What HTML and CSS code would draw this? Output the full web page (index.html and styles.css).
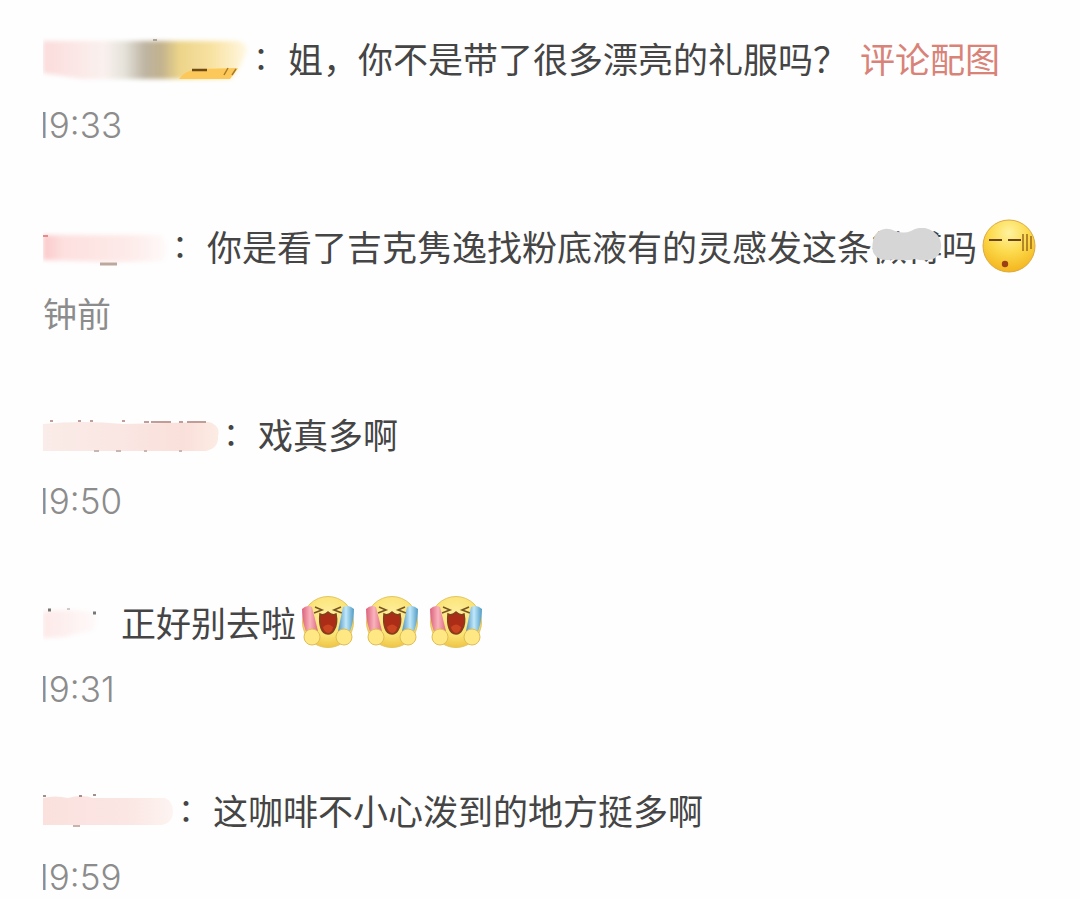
FILE: index.html
```html
<!DOCTYPE html>
<html lang="zh-CN">
<head>
<meta charset="utf-8">
<meta name="viewport" content="width=device-width, initial-scale=1">
<title>评论</title>
<link rel="stylesheet" href="styles.css">
</head>
<body>
<svg class="defs" aria-hidden="true">
  <defs>
    <filter id="soft" x="-10%" y="-30%" width="120%" height="160%"><feGaussianBlur stdDeviation="2"/></filter>
    <filter id="edge" x="-10%" y="-30%" width="120%" height="160%"><feGaussianBlur stdDeviation="0.7"/></filter>
    <linearGradient id="g1">
      <stop offset="0" stop-color="#fbdcdc"/><stop offset=".3" stop-color="#faf1ee"/><stop offset=".4" stop-color="#e5e2da"/><stop offset=".5" stop-color="#beb4a2"/><stop offset=".58" stop-color="#c2b28e"/><stop offset=".67" stop-color="#ecd489"/><stop offset=".84" stop-color="#f9e3a5"/><stop offset="1" stop-color="#fff8e3"/>
    </linearGradient>
    <linearGradient id="g2">
      <stop offset="0" stop-color="#fcc9ca"/><stop offset=".16" stop-color="#fde0df"/><stop offset=".7" stop-color="#fdebe9"/><stop offset="1" stop-color="#fefafa"/>
    </linearGradient>
    <linearGradient id="g3">
      <stop offset="0" stop-color="#faece8"/><stop offset=".45" stop-color="#fae6e3"/><stop offset=".8" stop-color="#fae0da"/><stop offset="1" stop-color="#fcece3"/>
    </linearGradient>
    <linearGradient id="g4">
      <stop offset="0" stop-color="#fde9e8"/><stop offset="1" stop-color="#fefafa"/>
    </linearGradient>
    <linearGradient id="g5">
      <stop offset="0" stop-color="#fae1de"/><stop offset=".65" stop-color="#fbe6e3"/><stop offset="1" stop-color="#fdf4f1"/>
    </linearGradient>
    <radialGradient id="face" cx=".5" cy=".25" r=".75">
      <stop offset="0" stop-color="#fff3a0"/><stop offset=".5" stop-color="#fcda4c"/><stop offset="1" stop-color="#f4b51e"/>
    </radialGradient>
    <radialGradient id="cheer" cx=".5" cy=".35" r=".65">
      <stop offset="0" stop-color="#fff0a0"/><stop offset=".65" stop-color="#fae272"/><stop offset="1" stop-color="#efc545"/>
    </radialGradient>
    <linearGradient id="pink">
      <stop offset="0" stop-color="#dd607b"/><stop offset=".5" stop-color="#f9b3bd"/><stop offset="1" stop-color="#de6b83"/>
    </linearGradient>
    <linearGradient id="blue">
      <stop offset="0" stop-color="#5295bd"/><stop offset=".5" stop-color="#c0e8fa"/><stop offset="1" stop-color="#529bc5"/>
    </linearGradient>
    <symbol id="laugh" viewBox="0 0 54 54">
      <circle cx="27" cy="27" r="25.500" fill="url(#cheer)" stroke="#e4c561"/>
      <path d="M14 12l7 3-8 3M40 12l-7 3 8 3" fill="none" stroke="#765524" stroke-width="1.600"/>
      <path d="M19 19q4 2 8-2 4 4 8 2 2 10-2 16-2 4-6 4-5 0-7-6-2-6-1-14z" fill="#ac2d17" stroke="#7e421c" stroke-width="1.500"/>
      <path d="M22 32q5-5 10 0-1 6-5 6-4-1-5-6z" fill="#c94522"/>
      <path d="M1 14q5-5 10-2l6 24-10 5q-6-12-6-27z" fill="url(#pink)"/>
      <path d="M53 14q-5-5-11-2l-5 24 10 5q6-12 6-27z" fill="url(#blue)"/>
      <circle cx="11" cy="42" r="8" fill="#ffe783" stroke="#dfbe55"/>
      <circle cx="43" cy="42" r="8" fill="#ffe783" stroke="#dfbe55"/>
    </symbol>
  </defs>
</svg>
<main class="comments">
  <article class="comment">
    <div class="line">
      <svg class="name name-a" viewBox="0 0 210 64" aria-hidden="true">
        <path d="M0 13H194q14 3 8 14-5 14-14 24H40L0 45z" fill="url(#g1)" filter="url(#soft)"/>
        <path d="M136 51q6-9 20-10l39-1-8 11z" fill="#fcc85a" filter="url(#edge)"/>
        <path d="M149 42h15" stroke="#6e4b15" stroke-width="2.500"/>
        <path d="M181 47l4-7m4 7l4-6" stroke="#a67b28" stroke-width="1.500"/>
        <path d="M110 12h4" stroke="#aaa59a" stroke-width="2"/>
      </svg>
      <p class="message"><span class="colon">：</span>姐，你不是带了很多漂亮的礼服吗？<a class="link" href="#">评论配图</a></p>
    </div>
    <time class="time clipped">19:33</time>
  </article>

  <article class="comment">
    <div class="line">
      <svg class="name name-b" viewBox="0 0 129 64" aria-hidden="true">
        <path d="M0 19H118q10 9 3 26L70 46 0 44z" fill="url(#g2)" filter="url(#soft)"/>
        <path d="M0 20h5" stroke="#e98b8b" stroke-width="2"/>
        <path d="M57 48h17" stroke="#bda89d" stroke-width="3"/>
      </svg>
      <p class="message"><span class="colon">：</span>你是看了吉克隽逸找粉底液有的灵感发这条<span class="masked">微博<svg class="mask" viewBox="0 0 70 36" aria-hidden="true"><path d="M3 7Q11-3 23 3q9 3 16 0 12-7 23 1 8 6 7 15-1 12-13 13-6 1-13-1-7 2-15 1-7-1-11 0Q5 33 1 24-1 15 3 7z" fill="#d6d6d6"/></svg></span>吗<svg class="emoji" viewBox="0 0 54 54" role="img" aria-label="无语">
        <circle cx="27" cy="27" r="26" fill="url(#face)" stroke="#dca943"/>
        <path d="M7 21h13M26 21h13" stroke="#6c461a" stroke-width="2.200"/>
        <path d="M41 15v17M45 15v17M49 17v13" stroke="#9b6a1d" stroke-width="1.500"/>
        <circle cx="23" cy="45" r="3.200" fill="#9c3f17"/>
      </svg></p>
    </div>
    <time class="time">钟前</time>
  </article>

  <article class="comment">
    <div class="line">
      <svg class="name name-c" viewBox="0 0 180 64" aria-hidden="true">
        <path d="M0 20Q40 16 80 20L166 18q12 4 9 14 1 12-12 15H0z" fill="url(#g3)" filter="url(#edge)"/>
        <path d="M7 17h3M35 17h3M47 17h3M79 17h3M101 18h5M108 18h20M136 18h4M144 18h19" stroke="#c09d99" stroke-width="2"/>
        <path d="M51 47h5M73 47h5M101 47h3M136 47h3" stroke="#cbb5b0" stroke-width="2"/>
      </svg>
      <p class="message"><span class="colon">：</span>戏真多啊</p>
    </div>
    <time class="time clipped">19:50</time>
  </article>

  <article class="comment">
    <div class="line">
      <svg class="name name-d" viewBox="0 0 78 64" aria-hidden="true">
        <path d="M0 20Q22 16 50 20q7 9 0 19-18 2-28 6L0 46z" fill="url(#g4)" filter="url(#soft)"/>
        <path d="M5 18h3M50 21h3" stroke="#777" stroke-width="3"/>
        <path d="M24 17h3" stroke="#ccc" stroke-width="2"/>
      </svg>
      <p class="message">正好别去啦<svg class="emoji" role="img" aria-label="欢呼"><use href="#laugh"/></svg><svg class="emoji next" role="img" aria-label="欢呼"><use href="#laugh"/></svg><svg class="emoji next" role="img" aria-label="欢呼"><use href="#laugh"/></svg></p>
    </div>
    <time class="time clipped">19:31</time>
  </article>

  <article class="comment">
    <div class="line">
      <svg class="name name-e" viewBox="0 0 135 64" aria-hidden="true">
        <path d="M0 18q12-3 25 0 14-4 25 0H122q8 3 8 14-1 12-12 13H0z" fill="url(#g5)" filter="url(#edge)"/>
        <path d="M0 16h3M36 16h3M50 15h3" stroke="#a38e8b" stroke-width="2"/>
        <path d="M30 46h7" stroke="#c8b2aa" stroke-width="2"/>
      </svg>
      <p class="message"><span class="colon">：</span>这咖啡不小心泼到的地方挺多啊</p>
    </div>
    <time class="time clipped">19:59</time>
  </article>
</main>
</body>
</html>
```
FILE: styles.css
```css
* {
  box-sizing: border-box;
}

body {
  margin: 0;
  background: #fefefe;
  color: #454545;
  font-family: "Noto Sans CJK SC", sans-serif;
}

.defs {
  position: absolute;
  width: 0;
  height: 0;
}

.comments {
  display: flex;
  flex-direction: column;
  gap: 58px;
  padding: 28px 0 0 43px;
}

.line {
  display: flex;
  align-items: flex-start;
}

.name {
  flex: none;
  height: 64px;
}

.name-a { width: 210px; }
.name-b { width: 129px; }
.name-c { width: 180px; }
.name-d { width: 78px; }
.name-e { width: 135px; }

.message {
  margin: 0;
  font-size: 35px;
  line-height: 60px;
}

.colon {
  display: inline-block;
  width: 35px;
  font-size: 32px;
  line-height: 32px;
  vertical-align: 4px;
}

.link {
  margin-left: 12px;
  color: #d98378;
  text-decoration: none;
}

.masked {
  position: relative;
}

.mask {
  position: absolute;
  top: 8px;
  left: 0;
  width: 70px;
  height: 36px;
}

.emoji {
  width: 54px;
  height: 54px;
  margin-left: 5px;
  vertical-align: -12px;
}

.emoji.next {
  margin-left: 10px;
}

.time {
  display: block;
  overflow: hidden;
  color: #8c8c8c;
  font-size: 34px;
  line-height: 66px;
}

.clipped {
  font-family: Inter, "Liberation Sans", sans-serif;
  font-size: 35px;
  font-weight: 300;
  text-indent: -8px;
}
```
